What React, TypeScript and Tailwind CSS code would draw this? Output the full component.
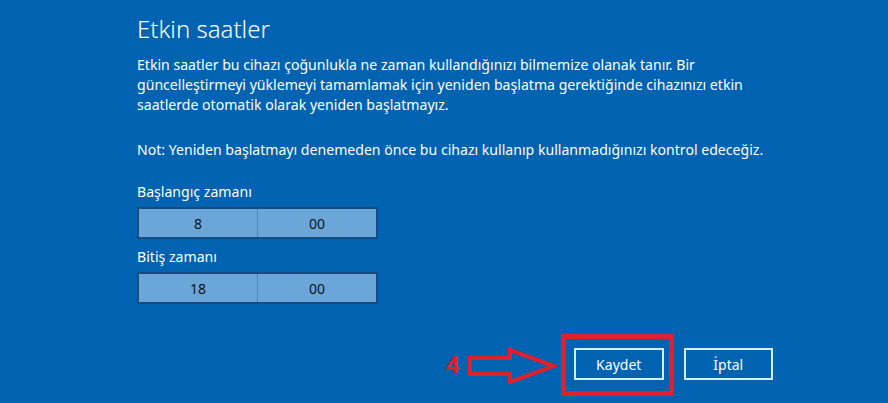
export default function App() {
  const font = { fontFamily: '"Noto Sans", "Open Sans", sans-serif' };

  function TimeBox({ hour, minute }: { hour: string; minute: string }) {
    return (
      <div className="mt-[5px] flex h-[32px] w-[241px] border-2 border-[#184b7e] bg-[#6aa6d8] text-[14px] text-[#111]">
        <div className="flex flex-1 items-center justify-center border-r border-[#4f87bd]">{hour}</div>
        <div className="flex flex-1 items-center justify-center">{minute}</div>
      </div>
    );
  }

  return (
    <div className="h-[403px] w-[888px] overflow-hidden bg-[#0063b1] pl-[137px] pt-[14px] text-white" style={font}>
      <h1 className="text-[24px] font-light leading-[30px]">Etkin saatler</h1>
      <p className="mt-[11px] whitespace-nowrap text-[14.1px] leading-[20px]">
        Etkin saatler bu cihazı çoğunlukla ne zaman kullandığınızı bilmemize olanak tanır. Bir
        <br />
        güncelleştirmeyi yüklemeyi tamamlamak için yeniden başlatma gerektiğinde cihazınızı etkin
        <br />
        saatlerde otomatik olarak yeniden başlatmayız.
      </p>
      <p className="mt-[25px] whitespace-nowrap text-[14.1px] leading-[20px]">
        Not: Yeniden başlatmayı denemeden önce bu cihazı kullanıp kullanmadığınızı kontrol edeceğiz.
      </p>

      <div className="mt-[22px] text-[14.1px] leading-[20px]">Başlangıç zamanı</div>
      <TimeBox hour="8" minute="00" />

      <div className="mt-[8px] text-[14.1px] leading-[20px]">Bitiş zamanı</div>
      <TimeBox hour="18" minute="00" />

      <div className="mt-[44px] flex h-[32px] items-center">
        <span className="ml-[309px] text-[24px] font-bold leading-none text-[#e0202c]">4</span>
        <svg width="90" height="36" viewBox="0 0 90 36" className="ml-[7px] mt-[4px]">
          <polygon
            points="3,10 43,10 43,2 87,18 43,34 43,26 3,26"
            fill="none"
            stroke="#e0202c"
            strokeWidth="4"
            strokeLinejoin="miter"
          />
        </svg>
        <div className="relative ml-[17px]">
          <button className="h-[32px] w-[90px] border-2 border-[#d4efff] text-[14px] text-white">Kaydet</button>
          <div className="pointer-events-none absolute -bottom-[16px] -left-[13px] -right-[10px] -top-[14px] border-[5px] border-[#e0202c]" />
        </div>
        <button className="ml-[20px] h-[32px] w-[89px] border-2 border-[#d4efff] text-[14px] text-white">İptal</button>
      </div>
    </div>
  );
}
